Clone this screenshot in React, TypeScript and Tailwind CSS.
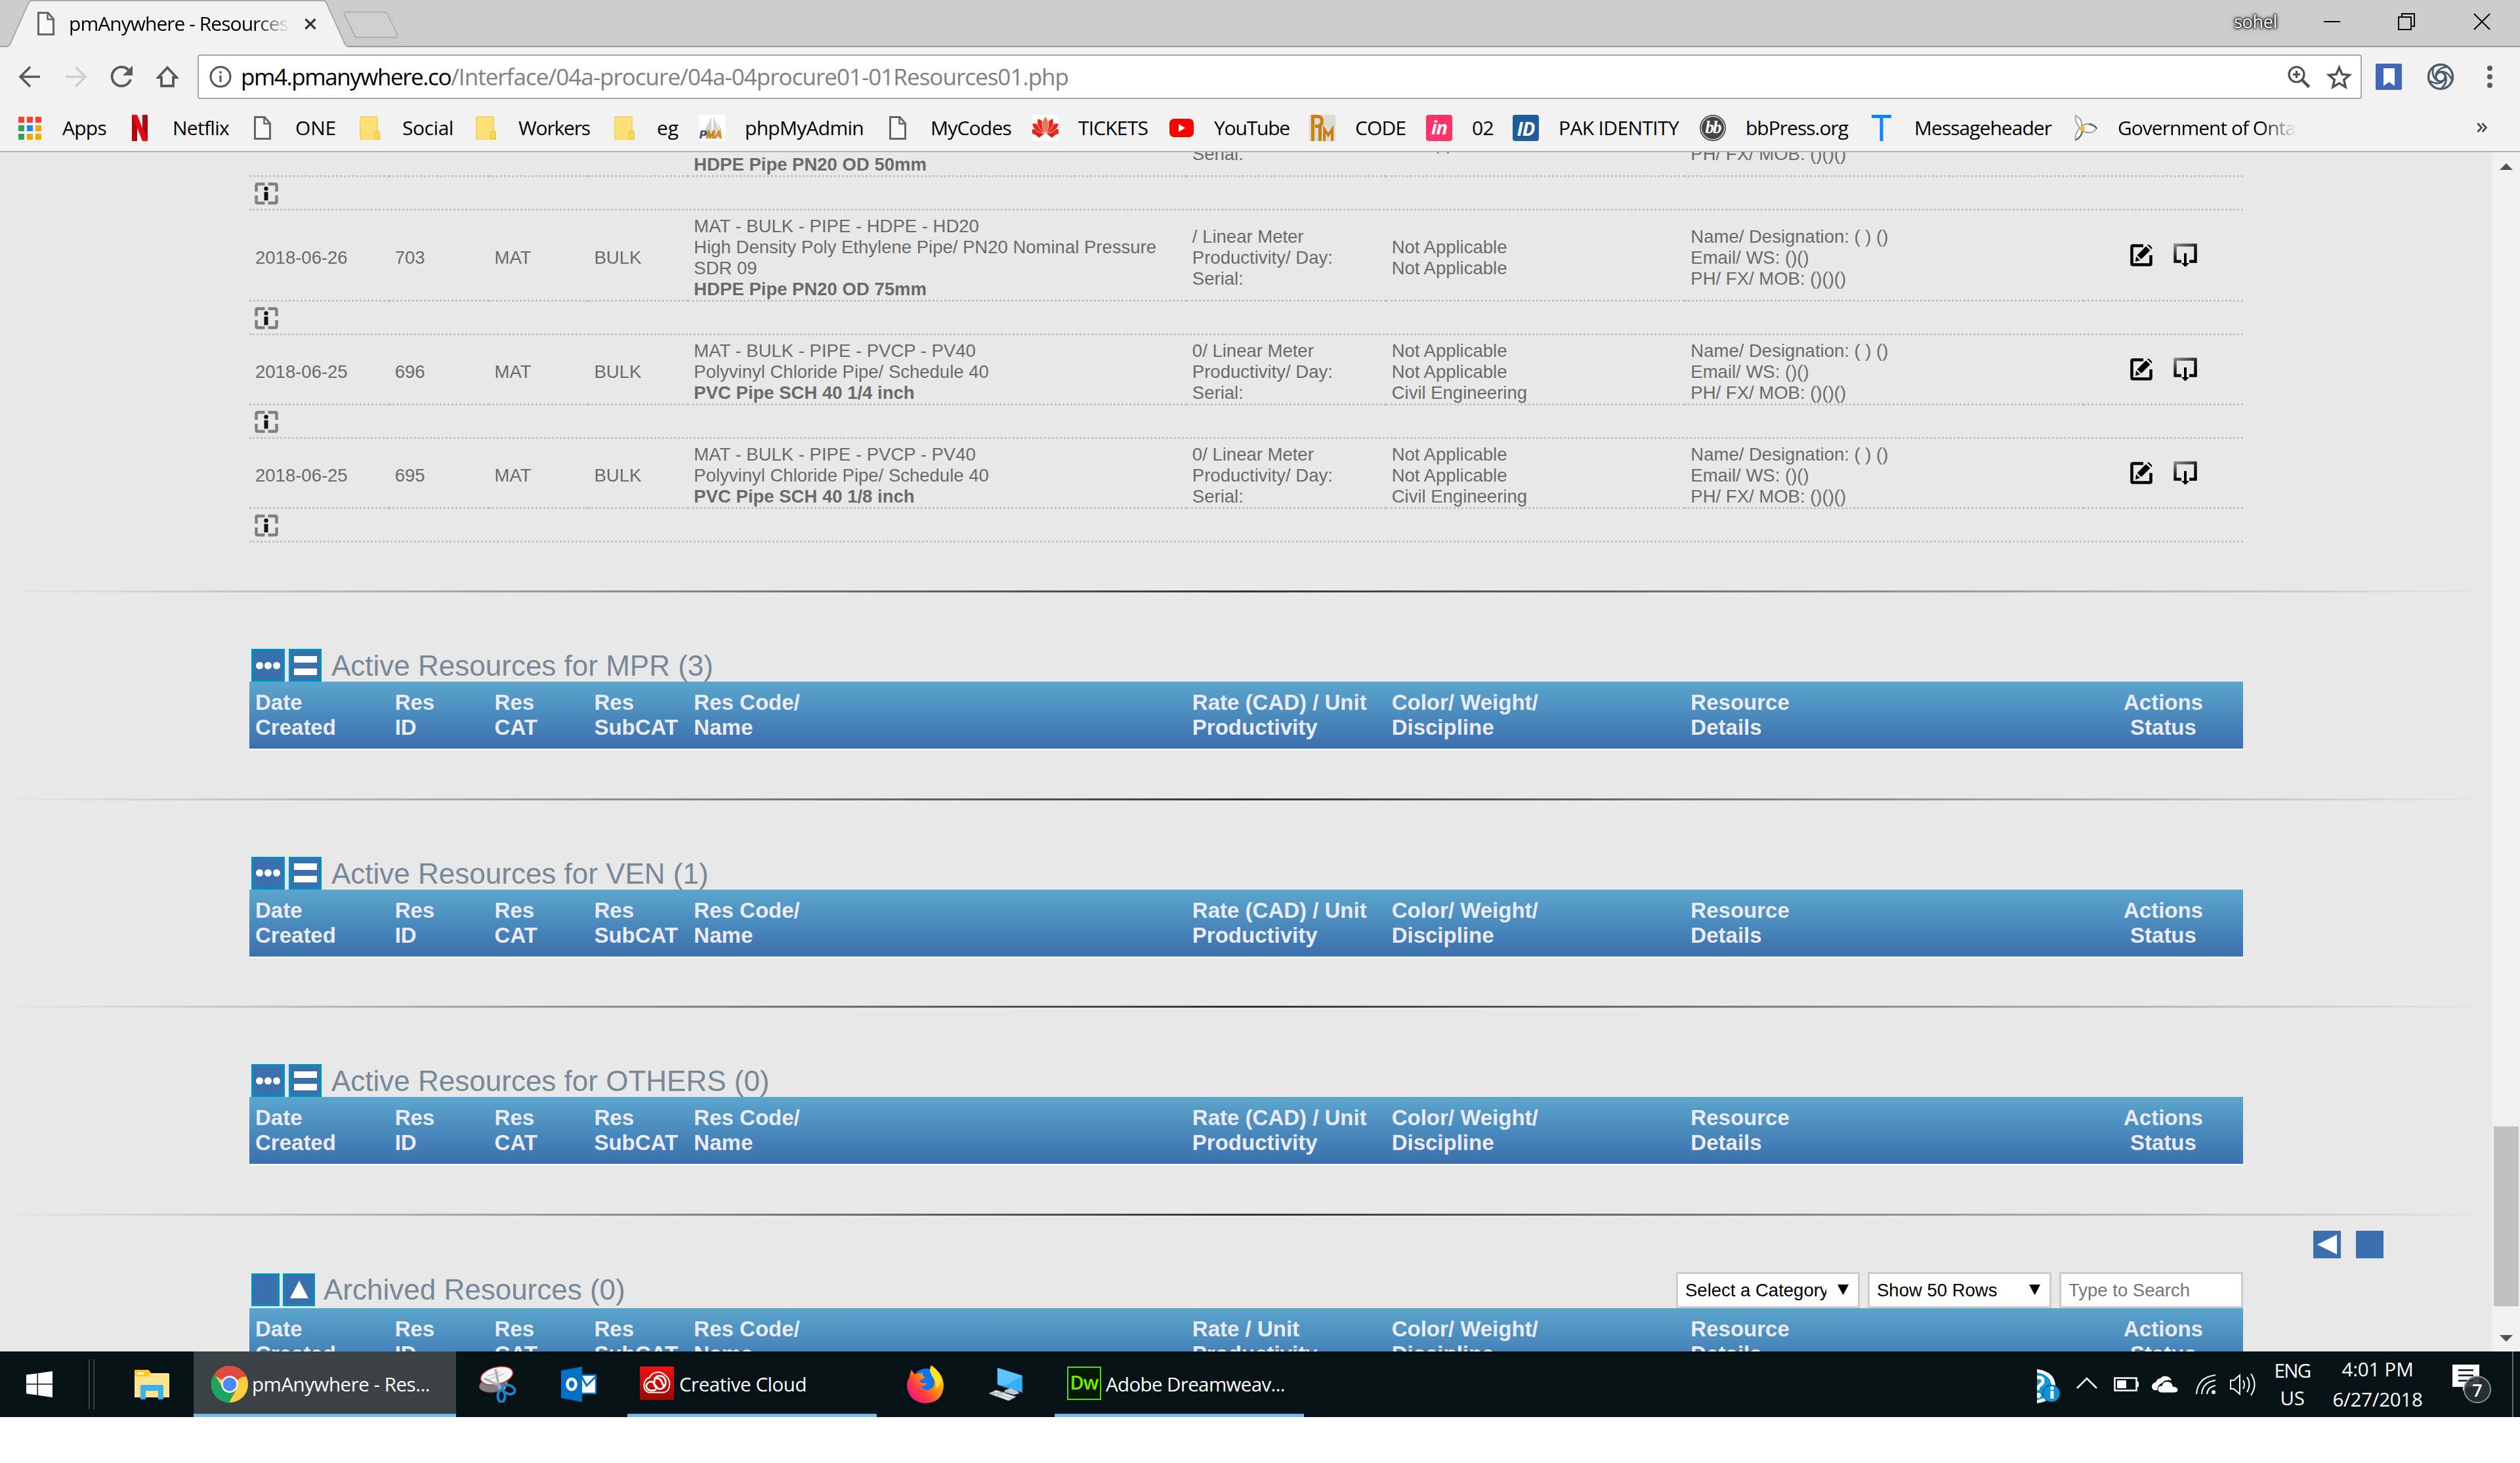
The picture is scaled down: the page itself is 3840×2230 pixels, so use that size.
import { useLayoutEffect, useRef } from "react";
import type { ReactNode } from "react";

/* Single-line label whose tracking is tuned so that it fills the given width. */
function Fit({ w, className = "", children }: { w: number; className?: string; children: string }) {
  const ref = useRef<HTMLSpanElement>(null);
  useLayoutEffect(() => {
    const el = ref.current;
    if (!el) return;
    el.style.letterSpacing = "0px";
    const natural = el.getBoundingClientRect().width;
    el.style.letterSpacing = `${(w - natural) / children.length}px`;
  }, [w, children]);
  return (
    <span ref={ref} className={`inline-block shrink-0 whitespace-pre font-['Open_Sans',sans-serif] ${className}`}>
      {children}
    </span>
  );
}

/* ---------- browser icons ---------- */

const FileIcon = () => (
  <svg className="h-[36px] w-[26px]" viewBox="0 0 26 36" fill="none" stroke="#666" strokeWidth="3">
    <path d="M1.500 1.500h14.500l8.500 9.500v23.500H1.500z" fill="#f8f8f8" />
    <path d="M15.500 1.500v10h9" strokeWidth="2.500" />
  </svg>
);

const FolderIcon = () => (
  <svg className="h-[36px] w-[31px]" viewBox="0 0 31 36">
    <path d="M2 1h23q2 0 2 2v20l4 2v8q0 3-3 3H4q-3 0-3-3V2q0-1 1-1z" fill="#ffe078" stroke="#f2cb4f" strokeWidth="1.500" />
    <path d="M23 34V25q0-2 2-2h3q2 0 2 2v7q0 3-3 3z" fill="#ffd95c" stroke="#eec23f" strokeWidth="1.500" />
  </svg>
);

const AppsIcon = () => (
  <div className="grid grid-cols-3 gap-[4px]">
    {["bg-[#ff3d32]", "bg-[#ff3d32]", "bg-[#ff3d32]", "bg-[#2ea456]", "bg-[#1e88e5]", "bg-[#f7a600]", "bg-[#2ea456]", "bg-[#f7a600]", "bg-[#f7a600]"].map((c, i) => (
      <div key={i} className={`size-[9px] ${c}`} />
    ))}
  </div>
);

const NetflixIcon = () => (
  <svg className="h-[40px] w-[24px]" viewBox="0 0 24 40">
    <path d="M0 0h8v40H0zM16 0h8v40h-8z" fill="#b1060f" />
    <path d="M0 0h8l16 40h-8z" fill="#e50914" />
  </svg>
);

const PmaIcon = () => (
  <div className="relative h-[40px] w-[40px] bg-white">
    <svg className="h-[26px] w-[40px]" viewBox="0 0 40 26">
      <path d="M19 3l-11 22h11zM22 2v22h9zM27 8l8 16h-3z" fill="#d3d3d3" />
    </svg>
    <span className="absolute bottom-[2px] left-[1px] font-['Liberation_Sans',sans-serif] text-[16px] leading-[14px] font-bold tracking-[-0.500px] text-[#f59a00] italic [text-shadow:0_0_1px_#222,0_0_1px_#222]">
      <span className="text-[#4c588f]">P</span>MA
    </span>
  </div>
);

const HuaweiIcon = () => (
  <svg className="h-[40px] w-[40px] bg-white" viewBox="0 0 40 40">
    {[-82, -54, 82, 54, -27, 27, 0].map((a) => (
      <path key={a} d="M20 28C13 20 14 8 20 3c6 5 7 17 0 25z" fill={a === 0 ? "#f4744f" : "#f0231c"} stroke="#fff" strokeWidth=".7" transform={`rotate(${a} 20 28)`} />
    ))}
    <path d="M4 29l14 0-8 6zM36 29l-14 0 8 6z" fill="#e01b1b" />
  </svg>
);

const YouTubeIcon = () => (
  <svg className="h-[28px] w-[37px]" viewBox="0 0 37 28">
    <rect width="37" height="28" rx="7" fill="#f00" />
    <path d="M14 8v12l10-6z" fill="#fff" />
  </svg>
);

const CodeIcon = () => (
  <svg className="h-[40px] w-[40px]" viewBox="0 0 40 40" fill="none" stroke="#c97f12" strokeWidth="5">
    <rect width="40" height="40" fill="#dedbd5" stroke="none" />
    <path d="M5.500 40V2.500h7q7 0 7 7t-7 8H9M16.500 17v23" />
    <path d="M23 40V22l6 9 6-9v18" strokeWidth="4" />
  </svg>
);

const InVisionIcon = () => (
  <div className="flex h-[40px] w-[40px] items-center justify-center rounded-[4px] bg-[#ff3366] pb-[3px] font-['Open_Sans',sans-serif] text-[29px] leading-none font-bold tracking-[-1px] text-white italic">in</div>
);

const IdIcon = () => (
  <div className="flex h-[40px] w-[40px] items-center justify-center rounded-[4px] bg-[#1f5c99] font-['Open_Sans',sans-serif] text-[29px] leading-none font-bold tracking-[-1px] text-white italic">ID</div>
);

const BbIcon = () => (
  <div className="flex size-[40px] items-center justify-center rounded-full border-[2px] border-[#555] bg-white">
    <div className="flex size-[34px] items-center justify-center rounded-full bg-[#444] pb-[2px] font-['Liberation_Serif',serif] text-[27px] leading-none font-bold tracking-[-2px] text-white italic">bb</div>
  </div>
);

const TIcon = () => (
  <svg className="h-[40px] w-[30px]" viewBox="0 0 30 40">
    <path d="M0 0h30v5H17.500v35h-5V5H0z" fill="#0a84ff" />
  </svg>
);

const TrilliumIcon = () => (
  <svg className="h-[40px] w-[40px]" viewBox="0 0 40 40">
    <path d="M5 1q11 6 9 17 6-6 13-3 6 1 10 6-6 7-12 6-8 0-10-4 1 10-10 16-2-9 6-19Q3 9 5 1z" fill="#fff" stroke="#999" strokeWidth="1.800" />
    <path d="M5 38q10-5 10-15M25 14q9 1 12 7" fill="none" stroke="#555" strokeWidth="1.800" />
    <circle cx="15" cy="21" r="4" fill="#f7b64a" />
  </svg>
);

/* ---------- browser chrome ---------- */

function TabStrip() {
  return (
    <div className="flex h-[72px] items-start justify-between border-b-[2px] border-[#9b9b9b] bg-[#cccccc]">
      <div className="relative h-[72px] w-[620px]">
        <svg className="absolute inset-0 h-[72px] w-[620px]" viewBox="0 0 620 72">
          <path d="M0 71H10q4 0 6-5L43 6q2-5 6-5H492q4 0 6 5L525 66q2 5 6 5v1H0z" fill="#f2f2f2" />
          <path d="M0 71H10q4 0 6-5L43 6q2-5 6-5H492q4 0 6 5L525 66q2 5 6 5H620" fill="none" stroke="#9b9b9b" strokeWidth="1.500" />
          <path d="M528 18.500H586q4 0 5 4L605 52q2 5-3 5H545q-4 0-5-4L525 23q-2-4.500 3-4.500z" fill="#cfcfcf" stroke="#a6a6a6" strokeWidth="1.500" />
        </svg>
        <div className="relative flex h-[72px] items-center pl-[57px]">
          <FileIcon />
          <div className="ml-[22px] w-[336px] [mask-image:linear-gradient(to_right,#000_84%,transparent)]">
            <Fit w={334} className="text-[30px] leading-[40px] text-black">pmAnywhere - Resources</Fit>
          </div>
          <svg className="ml-[23px] h-[17px] w-[18px]" viewBox="0 0 18 17" stroke="#333" strokeWidth="3.200">
            <path d="M1.500 1l15 15M16.500 1l-15 15" />
          </svg>
        </div>
      </div>
      <div className="flex h-[66px] items-center pr-[45px]">
        <Fit w={66} className="text-[27px] leading-[40px] text-white [text-shadow:0_0_2px_#000,0_0_3px_#000,0_0_4px_#222,0_0_6px_#444]">sohel</Fit>
        <div className="ml-[71px] h-[2px] w-[25px] bg-black" />
        <svg className="ml-[88px] h-[26px] w-[26px]" viewBox="0 0 26 26" fill="none" stroke="#000" strokeWidth="2">
          <path d="M1 6h19v19H1zM6 6V1h19v19h-5" />
        </svg>
        <svg className="ml-[89px] h-[26px] w-[26px]" viewBox="0 0 26 26" stroke="#000" strokeWidth="2">
          <path d="M1 1l24 24M25 1L1 25" />
        </svg>
      </div>
    </div>
  );
}

function Toolbar() {
  return (
    <div className="flex h-[90px] items-center bg-[#f2f2f2] pl-[28px]">
      <svg className="h-[34px] w-[34px]" viewBox="0 0 34 34" fill="none" stroke="#5a5a5a" strokeWidth="3.600">
        <path d="M33 17H3M18 2L3 17l15 15" />
      </svg>
      <svg className="ml-[37px] h-[34px] w-[34px]" viewBox="0 0 34 34" fill="none" stroke="#d0d0d0" strokeWidth="3.600">
        <path d="M1 17h30M16 2l15 15-15 15" />
      </svg>
      <svg className="ml-[35px] h-[34px] w-[34px]" viewBox="0 0 34 34" fill="none" stroke="#5a5a5a" strokeWidth="3.800">
        <path d="M28 7A14.500 14.500 0 1 0 31 21" />
        <path d="M34 0v15H19z" fill="#5a5a5a" stroke="none" />
      </svg>
      <svg className="ml-[36px] h-[34px] w-[34px]" viewBox="0 0 34 34" fill="none" stroke="#5a5a5a" strokeWidth="3.800">
        <path d="M17 3L3 18h5v13h18V18h5z" />
      </svg>
      <div className="ml-[29px] flex h-[68px] w-[3298px] items-center rounded-[4px] border-[2px] border-[#a6a6a6] bg-white pl-[16px]">
        <svg className="h-[34px] w-[34px]" viewBox="0 0 34 34" fill="none" stroke="#555" strokeWidth="3">
          <circle cx="17" cy="17" r="15" />
          <path d="M17 15v10M17 8.500v3.500" />
        </svg>
        <div className="ml-[14px] flex text-[35px] leading-[50px]">
          <Fit w={320} className="text-black">pm4.pmanywhere.co</Fit>
          <Fit w={941} className="text-[#808080]">/Interface/04a-procure/04a-04procure01-01Resources01.php</Fit>
        </div>
        <svg className="ml-auto h-[34px] w-[34px]" viewBox="0 0 34 34" fill="none" stroke="#505050" strokeWidth="3.200">
          <circle cx="13.500" cy="13.500" r="11.500" />
          <path d="M22 22l10.500 10.500M8 13.500h11M13.500 8v11" />
          <path d="M23 23l9.500 9.500" strokeWidth="4.500" />
        </svg>
        <svg className="mr-[13px] ml-[25px] h-[37px] w-[39px]" viewBox="0 0 39 37" fill="none" stroke="#505050" strokeWidth="3.400">
          <path d="M19.500 4l4.400 10.300 11.300 1-8.500 7.400 2.500 11-9.700-5.800-9.700 5.800 2.500-11-8.500-7.400 11.300-1z" />
        </svg>
      </div>
      <div className="ml-[21px] flex h-[40px] w-[40px] items-center justify-center rounded-[2px] bg-[#4267b8]">
        <svg className="h-[27px] w-[17px]" viewBox="0 0 17 27"><path d="M0 0h17v27l-8.500-6L0 27z" fill="#fff" /></svg>
      </div>
      <svg className="ml-[38px] h-[42px] w-[42px]" viewBox="0 0 42 42" fill="none" stroke="#4a5a68" strokeWidth="3.400">
        <circle cx="21" cy="21" r="18.500" />
        {[0, 72, 144, 216, 288].map((a) => (
          <path key={a} d="M16.500 14.500C23 12 29 17 29.500 23c.5 6-2 11-7 15" transform={`rotate(${a} 21 21)`} strokeWidth="2.800" />
        ))}
      </svg>
      <div className="ml-[50px] flex flex-col gap-[5px]">
        <div className="size-[8px] rounded-full bg-[#5a5a5a]" />
        <div className="size-[8px] rounded-full bg-[#5a5a5a]" />
        <div className="size-[8px] rounded-full bg-[#5a5a5a]" />
      </div>
    </div>
  );
}

type Mark = { box: string; icon: ReactNode; label: string; w: number };
const marks: Mark[] = [
  { box: "w-[168px]", icon: <AppsIcon />, label: "Apps", w: 67 },
  { box: "w-[187px]", icon: <NetflixIcon />, label: "Netflix", w: 86 },
  { box: "w-[163px]", icon: <FileIcon />, label: "ONE", w: 62 },
  { box: "w-[177px]", icon: <FolderIcon />, label: "Social", w: 78 },
  { box: "w-[211px]", icon: <FolderIcon />, label: "Workers", w: 109 },
  { box: "w-[134px]", icon: <FolderIcon />, label: "eg", w: 33 },
  { box: "w-[283px]", icon: <PmaIcon />, label: "phpMyAdmin", w: 181 },
  { box: "w-[225px]", icon: <FileIcon />, label: "MyCodes", w: 123 },
  { box: "w-[207px]", icon: <HuaweiIcon />, label: "TICKETS", w: 106 },
  { box: "w-[215px]", icon: <YouTubeIcon />, label: "YouTube", w: 115 },
  { box: "w-[178px]", icon: <CodeIcon />, label: "CODE", w: 77 },
  { box: "w-[132px]", icon: <InVisionIcon />, label: "02", w: 33 },
  { box: "w-[285px]", icon: <IdIcon />, label: "PAK IDENTITY", w: 183 },
  { box: "w-[257px]", icon: <BbIcon />, label: "bbPress.org", w: 156 },
  { box: "w-[311px]", icon: <TIcon />, label: "Messageheader", w: 209 },
];

function Bookmarks() {
  return (
    <div className="flex h-[70px] items-start border-b-[2px] border-[#b4b4b4] bg-[#f2f2f2] pt-[13px] pl-[25px]">
      {marks.map((m) => (
        <div key={m.label} className={`flex h-[40px] shrink-0 items-center ${m.box}`}>
          <div className="flex w-[40px] justify-center">{m.icon}</div>
          <Fit w={m.w} className="ml-[30px] text-[30px] leading-[40px] text-black">{m.label}</Fit>
        </div>
      ))}
      <div className="flex h-[40px] items-center">
        <TrilliumIcon />
        <div className="ml-[29px] w-[272px] [mask-image:linear-gradient(to_right,#000_80%,transparent)]">
          <Fit w={271} className="text-[30px] leading-[40px] text-black">Government of Onta</Fit>
        </div>
      </div>
      <svg className="mt-[12px] ml-[275px] h-[15px] w-[17px]" viewBox="0 0 17 15" fill="none" stroke="#444" strokeWidth="2.600">
        <path d="M1.500 1l6 6.500-6 6.500M8.500 1l6 6.500-6 6.500" />
      </svg>
    </div>
  );
}

/* ---------- page ---------- */

const cols = "grid grid-cols-[7fr_5fr_5fr_5fr_25fr_10fr_15fr_20fr_8fr]";
const line = "border-b-[3px] border-dotted border-[#c2c2c2]";
const cell = `flex min-w-0 flex-col justify-center pt-[8px] pl-[9px] whitespace-nowrap ${line}`;
const endCell = `flex min-w-0 flex-col justify-end pl-[9px] whitespace-nowrap ${line}`;

const InfoIcon = () => (
  <svg className="h-[34px] w-[36px]" viewBox="0 0 36 34" fill="none">
    <path d="M2.500 14V4.500q0-2 2-2H15.500M20.500 2.500H31.500q2 0 2 2V14M33.500 20v9.500q0 2-2 2H20.500M15.500 31.500H4.500q-2 0-2-2V20" stroke="#808080" strokeWidth="4.500" />
    <path d="M17.500 14.500V27.500" stroke="#111" strokeWidth="6" />
    <circle cx="17.500" cy="9.500" r="3.200" fill="#111" />
  </svg>
);

const EditIcon = () => (
  <svg className="h-[34px] w-[34px]" viewBox="0 0 34 34">
    <path d="M20 2.500H4q-1.500 0-1.500 1.500V30q0 1.500 1.500 1.500H30q1.500 0 1.500-1.500V17" fill="none" stroke="#000" strokeWidth="4.500" />
    <path d="M24 3.500l6.500 6L17 23l-6.500-6zM9 19l6 5.500L8 27zM26 1.500q1.500-1.500 3.500 0l3.500 3.500q1 1.500-.5 3z" fill="#000" />
  </svg>
);

const DownloadIcon = () => (
  <svg className="h-[36px] w-[36px]" viewBox="0 0 36 36">
    <defs>
      <linearGradient id="frame" x1="0" y1="0" x2="0.6" y2="1">
        <stop offset="0" stopColor="#888" />
        <stop offset=".5" stopColor="#222" />
        <stop offset="1" stopColor="#000" />
      </linearGradient>
    </defs>
    <path d="M12 27.500H2.500v-25h31v25H24" fill="none" stroke="url(#frame)" strokeWidth="4.500" />
    <path d="M16 15h4v15h4l-6 6-6-6h4z" fill="#000" />
  </svg>
);

type Res = { date: string; id: string; name: string[]; bold: string; rate: string; disc: string[] };
const na = "Not Applicable";
const pvc = ["MAT - BULK - PIPE - PVCP - PV40", "Polyvinyl Chloride Pipe/ Schedule 40"];
const rows: Res[] = [
  {
    date: "2018-06-26",
    id: "703",
    name: ["MAT - BULK - PIPE - HDPE - HD20", "High Density Poly Ethylene Pipe/ PN20 Nominal Pressure", "SDR 09"],
    bold: "HDPE Pipe PN20 OD 75mm",
    rate: "/ Linear Meter",
    disc: [na, na],
  },
  { date: "2018-06-25", id: "696", name: pvc, bold: "PVC Pipe SCH 40 1/4 inch", rate: "0/ Linear Meter", disc: [na, na, "Civil Engineering"] },
  { date: "2018-06-25", id: "695", name: pvc, bold: "PVC Pipe SCH 40 1/8 inch", rate: "0/ Linear Meter", disc: [na, na, "Civil Engineering"] },
];

const InfoRow = () => (
  <div className={`flex h-[51px] items-center pt-[1px] pl-[8px] ${line}`}>
    <InfoIcon />
  </div>
);

/* Row that is mostly scrolled out above the viewport; only its last lines show. */
function ScrolledRow() {
  return (
    <div className={`${cols} grid-rows-[38px] text-[27.500px] leading-[32px] text-[#6a6a6a]`}>
      <div className={line} />
      <div className={line} />
      <div className={line} />
      <div className={line} />
      <div className={endCell}><div className="font-bold">HDPE Pipe PN20 OD 50mm</div></div>
      <div className={`${endCell} pb-[16px]`}><div>Serial:</div></div>
      <div className={`${endCell} pb-[32px]`}><div>Not Applicable</div></div>
      <div className={`${endCell} pb-[16px]`}><div>PH/ FX/ MOB: ()()()</div></div>
      <div className={line} />
    </div>
  );
}

function ResourceRow({ r }: { r: Res }) {
  return (
    <>
      <div className={`${cols} text-[27.500px] leading-[32px] text-[#6a6a6a]`}>
        <div className={cell}>{r.date}</div>
        <div className={cell}>{r.id}</div>
        <div className={cell}>MAT</div>
        <div className={cell}>BULK</div>
        <div className={cell}>
          {r.name.map((n) => <div key={n}>{n}</div>)}
          <div className="font-bold">{r.bold}</div>
        </div>
        <div className={cell}>
          <div>{r.rate}</div>
          <div>Productivity/ Day:</div>
          <div>Serial:</div>
        </div>
        <div className={cell}>{r.disc.map((d, i) => <div key={i}>{d}</div>)}</div>
        <div className={cell}>
          <div>Name/ Designation: ( ) ()</div>
          <div>Email/ WS: ()()</div>
          <div>PH/ FX/ MOB: ()()()</div>
        </div>
        <div className={`flex items-center justify-center gap-[32px] pl-[2px] ${line}`}>
          <EditIcon />
          <DownloadIcon />
        </div>
      </div>
      <InfoRow />
    </>
  );
}

function HeaderBar({ rate = "Rate (CAD) / Unit" }: { rate?: string }) {
  const heads = [["Date", "Created"], ["Res", "ID"], ["Res", "CAT"], ["Res", "SubCAT"], ["Res Code/", "Name"], [rate, "Productivity"], ["Color/ Weight/", "Discipline"], ["Resource", "Details"]];
  return (
    <div className={`${cols} h-[105px] border-b-[3px] border-[#f6f6f8] bg-gradient-to-b from-[#5ba6cd] to-[#3b6fad] bg-clip-padding pt-[13px] text-[33px] leading-[38px] font-bold whitespace-nowrap text-[#ebebfa]`}>
      {heads.map(([a, b], i) => (
        <div key={i} className="min-w-0 pl-[9px]">
          <div>{a}</div>
          <div>{b}</div>
        </div>
      ))}
      <div className="min-w-0 text-center">
        <div>Actions</div>
        <div>Status</div>
      </div>
    </div>
  );
}

const Rule = () => (
  <div className="h-[3px] w-[3798px] bg-[linear-gradient(to_right,rgba(51,51,51,0),rgba(51,51,51,1)_50%,rgba(51,51,51,0))]" />
);

function ActiveSection({ name }: { name: string }) {
  return (
    <section className="h-[316.600px]">
      <Rule />
      <div className="mx-auto mt-[86px] w-[3038px]">
        <div className="flex h-[50px] pl-[3px]">
          <div className="flex w-[51px] items-center justify-center gap-[2px] border-[3px] border-[#0091bd] bg-[#3b6fad]">
            <div className="size-[11px] rounded-full bg-white" />
            <div className="size-[11px] rounded-full bg-white" />
            <div className="size-[11px] rounded-full bg-white" />
          </div>
          <div className="ml-[6px] flex w-[50px] flex-col items-center justify-center gap-[9px] border-[3px] border-[#0091bd] bg-[#3b6fad]">
            <div className="h-[10px] w-[35px] bg-white" />
            <div className="h-[10px] w-[35px] bg-white" />
          </div>
          <h2 className="ml-[15px] text-[44px] leading-[51px] text-[#778899]">{`Active Resources for ${name}`}</h2>
        </div>
        <HeaderBar />
      </div>
    </section>
  );
}

function Select({ label }: { label: string }) {
  return (
    <div className="flex h-[55px] w-[280px] items-center border-[3px] border-[#cccccc] bg-white pl-[11px] text-black">
      <div className="w-[215px] overflow-hidden whitespace-nowrap">{label}</div>
      <svg className="ml-[17px] h-[16px] w-[17px]" viewBox="0 0 17 16"><path d="M0 0h17L8.500 16z" /></svg>
    </div>
  );
}

function Page() {
  return (
    <div className="flex h-[1828px] bg-[#e8e8e8]">
      <main className="relative h-[1828px] w-[3798px] overflow-hidden font-['Liberation_Sans',Arial,sans-serif]">
        <div className="mx-auto mb-[73px] w-[3038px]">
          <ScrolledRow />
          <InfoRow />
          {rows.map((r) => <ResourceRow key={r.id} r={r} />)}
        </div>
        <ActiveSection name="MPR (3)" />
        <ActiveSection name="VEN (1)" />
        <ActiveSection name="OTHERS (0)" />
        <Rule />
        <div className="mx-auto mt-[86px] w-[3038px]">
          <div className="flex h-[55px] justify-between">
            <div className="flex h-[55px] items-start pt-[2px] pl-[3px]">
              <div className="h-[50px] w-[43px] border-[3px] border-[#0091bd] bg-[#3b6fad]" />
              <div className="ml-[5px] flex h-[50px] w-[49px] items-center justify-center border-[3px] border-[#0091bd] bg-[#3b6fad]">
                <svg className="h-[27px] w-[28px]" viewBox="0 0 28 27"><path d="M14 0l14 27H0z" fill="#fff" /></svg>
              </div>
              <h2 className="ml-[13px] text-[44px] leading-[49px] text-[#778899]">Archived Resources (0)</h2>
            </div>
            <div className="flex gap-[12px] text-[27.500px]">
              <Select label="Select a Category" />
              <Select label="Show 50 Rows" />
              <div className="flex h-[55px] w-[280px] items-center border-[3px] border-[#cccccc] bg-white pl-[11px] text-[#757575]">Type to Search</div>
            </div>
          </div>
          <HeaderBar rate="Rate / Unit" />
        </div>
        <div className="absolute top-[1644px] left-[3525px] flex gap-[23px]">
          <div className="flex h-[42px] w-[42px] items-center justify-center bg-[#3b6fad]">
            <svg className="h-[30px] w-[30px]" viewBox="0 0 30 30"><path d="M30 0v30L0 15z" fill="#fff" /></svg>
          </div>
          <div className="h-[42px] w-[42px] bg-[#3b6fad]" />
        </div>
      </main>
      <div className="flex w-[42px] flex-col items-center bg-[#f1f1f1]">
        <svg className="mt-[17px] h-[10px] w-[20px]" viewBox="0 0 20 10"><path d="M10 0l10 10H0z" fill="#505050" /></svg>
        <div className="mt-[1458px] h-[274px] w-[38px] bg-[#c1c1c1]" />
        <svg className="mt-[44px] h-[10px] w-[20px]" viewBox="0 0 20 10"><path d="M0 0h20L10 10z" fill="#505050" /></svg>
      </div>
    </div>
  );
}

/* ---------- taskbar ---------- */

const WindowsLogo = () => (
  <svg className="h-[40px] w-[40px]" viewBox="0 0 40 40" fill="#fff">
    <path d="M0 5.600L16.500 3.400V19H0zM18 3.200L40 0v19H18zM0 20.500h16.500v16L0 34.300zM18 20.500h22V40l-22-3.200z" />
  </svg>
);

const ExplorerIcon = () => (
  <svg className="h-[45px] w-[53px]" viewBox="0 0 53 45">
    <path d="M0 2q0-2 2-2h19l4 5h26q2 0 2 2v35H0z" fill="#ffe48f" />
    <path d="M0 2q0-2 2-2h19l4 5-4 5H0z" fill="#ffc928" />
    <path d="M4 4h10v3H4z" fill="#fff" />
    <path d="M9 45V25q0-2 2-2h31q2 0 2 2v20h-8V32H17v13z" fill="#38b4ea" />
  </svg>
);

const ChromeIcon = () => (
  <svg className="h-[56px] w-[56px]" viewBox="0 0 56 56">
    <circle cx="28" cy="28" r="28" fill="#ffcd40" />
    <path d="M28 28L3.800 14A28 28 0 0 1 52.200 14z" fill="#dd4b3e" />
    <path d="M28 0a28 28 0 0 1 25.500 16.500H28z" fill="#dd4b3e" />
    <path d="M4.500 12.600A28 28 0 0 0 27 56l12-21.500L18 34z" fill="#1da462" />
    <circle cx="28" cy="28" r="13" fill="#f1f1f1" />
    <circle cx="28" cy="28" r="10.300" fill="#4a8af4" />
  </svg>
);

const SnipIcon = () => (
  <svg className="h-[56px] w-[56px]" viewBox="0 0 56 56" fill="none">
    <ellipse cx="22" cy="29" rx="22" ry="11" fill="#7d8083" stroke="#a33" strokeWidth="1" transform="rotate(-8 22 29)" />
    <ellipse cx="27" cy="15" rx="25" ry="13" fill="#f4f4f6" stroke="#c33" strokeWidth="1.500" transform="rotate(-14 27 15)" />
    <path d="M12 16l20-7M14 21l24-9" stroke="#c4c4c8" strokeWidth="1.500" />
    <path d="M25 5l7 34M8 19l32 16" stroke="#a5abb5" strokeWidth="3.500" />
    <ellipse cx="45" cy="36" rx="10" ry="6.500" stroke="#1b86cc" strokeWidth="4" transform="rotate(20 45 36)" />
    <ellipse cx="34" cy="46" rx="5.500" ry="9" stroke="#1b86cc" strokeWidth="4" />
  </svg>
);

const OutlookIcon = () => (
  <svg className="h-[54px] w-[54px]" viewBox="0 0 54 54" fill="none">
    <path d="M30 13h23v28H30z" fill="#fff" stroke="#0a74cf" strokeWidth="2.500" />
    <path d="M31 15l8 14 14-14" stroke="#0a74cf" strokeWidth="3" />
    <path d="M0 6L32 0v54L0 48z" fill="#0072c6" />
    <ellipse cx="16" cy="27" rx="6.500" ry="8" stroke="#fff" strokeWidth="4.500" />
  </svg>
);

const CreativeCloudIcon = () => (
  <svg className="h-[51px] w-[52px]" viewBox="0 0 52 51" fill="none" stroke="#fff" strokeWidth="2.800">
    <defs>
      <linearGradient id="cc" x1="0" y1="0" x2="0" y2="1">
        <stop offset="0" stopColor="#f40f0f" />
        <stop offset="1" stopColor="#9c0606" />
      </linearGradient>
    </defs>
    <rect width="52" height="51" fill="url(#cc)" stroke="none" />
    <path d="M15 39.500C4 39 3 20 15 16.500 19 7 33 6 39 14c9 5 9 25-4 25.500z" strokeWidth="2" />
    <path d="M28 34l-8-10c-5-3-11 2-10 7 2 7 11 6 15 4M22 20c3-8 14-8 17 1 2 9-5 14-10 13-6-1-9-8-6-14M25 19c3-3 7 1 8 4l4 8" />
  </svg>
);

const FirefoxIcon = () => (
  <svg className="h-[58px] w-[56px]" viewBox="0 0 56 58">
    <defs>
      <linearGradient id="fx" x1="1" y1="0" x2="0.1" y2="0.9">
        <stop offset="0" stopColor="#ffe52b" />
        <stop offset=".45" stopColor="#ff980e" />
        <stop offset=".75" stopColor="#ff3647" />
        <stop offset="1" stopColor="#e31587" />
      </linearGradient>
    </defs>
    <circle cx="29" cy="25" r="20" fill="#0a74f0" />
    <path d="M7 7l5 7q5-3 9-1l2-3q0 6 5 9-5 2-9 5 3 4 12 3-3 6-10 5 8 10 17 3 8-8 0-20Q32 8 37 0q5 4 9 8 9 8 10 22-1 27-28 28Q2 56 0 31q0-7 4-13 0-6 3-11z" fill="url(#fx)" />
    <path d="M38 1q-5 9 2 18 6 9 4 17 8-6 9-14Q49 8 38 1z" fill="#ffe226" />
  </svg>
);

const ComputerIcon = () => (
  <svg className="h-[50px] w-[52px]" viewBox="0 0 52 50">
    <path d="M13 0l38 12v26L13 26z" fill="#35aefb" stroke="#33414c" strokeWidth="1" />
    <path d="M13 0l38 12-26 15-12-2z" fill="#5cc3ff" />
    <path d="M24 34l9-3 11 5 2 3-8 2-14-4z" fill="#bfcad2" />
    <path d="M0 39l11-5 30 10-11 6z" fill="#dfe4e8" stroke="#8d979e" strokeWidth="1" />
    <path d="M5 37l30 10M3 40l27-4M12 43l14-7" stroke="#9aa3a9" strokeWidth="1" />
  </svg>
);

const HelpIcon = () => (
  <svg className="h-[54px] w-[35px]" viewBox="0 0 35 54">
    <path d="M0 1q28 4 28 26T0 53z" fill="#fff" />
    <path d="M0 6q22 4 22 21T0 48z" fill="#0f97d6" />
    <path d="M0 14q9-2 9 5 0 4-4 6-4 3-4 8" fill="none" stroke="#fff" strokeWidth="5" />
    <circle cx="2" cy="41" r="4" fill="#fff" />
    <circle cx="22" cy="38" r="13" fill="#0a94d8" stroke="#06425f" strokeWidth="1" />
    <path d="M23 34v12" stroke="#fff" strokeWidth="5" />
    <circle cx="23" cy="30" r="2.800" fill="#fff" />
  </svg>
);

function Taskbar() {
  const label = "text-[29.500px] leading-[40px] text-white";
  return (
    <div className="flex h-[100px] items-stretch bg-[#071216] text-white">
      <div className="flex w-[295px] shrink-0 items-center pl-[40px]">
        <WindowsLogo />
        <div className="ml-[55px] flex h-[76px] w-[9px] justify-between border-x-[2px] border-[#3a4245]" />
        <div className="ml-[61px]"><ExplorerIcon /></div>
      </div>
      <div className="flex w-[400px] shrink-0 items-center border-b-[5px] border-[#76b9ed] bg-[#3b4245] pt-[5px] pl-[27px]">
        <ChromeIcon />
        <Fit w={271} className={`ml-[6px] ${label}`}>pmAnywhere - Res...</Fit>
      </div>
      <div className="flex w-[261px] shrink-0 items-center pl-[35px]">
        <SnipIcon />
        <div className="ml-[69px]"><OutlookIcon /></div>
      </div>
      <div className="flex w-[380px] shrink-0 items-center border-b-[5px] border-[#76b9ed] pt-[5px] pl-[19px]">
        <div className="-mt-[3px]"><CreativeCloudIcon /></div>
        <Fit w={194} className={`ml-[8px] ${label}`}>Creative Cloud</Fit>
      </div>
      <div className="flex w-[271px] shrink-0 items-center pl-[46px]">
        <FirefoxIcon />
        <div className="ml-[69px]"><ComputerIcon /></div>
      </div>
      <div className="flex w-[380px] shrink-0 items-center border-b-[5px] border-[#76b9ed] pt-[5px] pl-[19px]">
        <div className="-mt-[3px] flex h-[51px] w-[52px] items-center justify-center border-[2px] border-[#4ee000] bg-[#061802] pb-[5px] font-['Open_Sans',sans-serif] text-[29px] leading-none font-semibold tracking-[-1px] text-[#6af400]">Dw</div>
        <Fit w={273} className={`ml-[7px] ${label}`}>Adobe Dreamweav...</Fit>
      </div>
      <div className="ml-auto flex shrink-0 items-center">
        <div className="mt-[6px]"><HelpIcon /></div>
        <svg className="mt-[-4px] ml-[25px] h-[18px] w-[32px]" viewBox="0 0 32 18" fill="none" stroke="#fff" strokeWidth="2.500"><path d="M1 17L16 2l15 15" /></svg>
        <svg className="ml-[25px] h-[22px] w-[38px]" viewBox="0 0 38 22" fill="none" stroke="#fff" strokeWidth="2.500">
          <path d="M1.500 1.500h33v19h-33z" /><path d="M5 5h14v12H5zM35 7h3v8h-3z" fill="#fff" stroke="none" />
        </svg>
        <svg className="ml-[20px] h-[26px] w-[40px]" viewBox="0 0 40 26">
          <path d="M3 22q-5-4-2-9 2-3 5-3Q8 4 13 4q4-5 10-3 5 1 7 6-10-2-14 4-8 3-7 11z" fill="#fff" />
          <path d="M14 26q-5-1-5-6 1-5 6-5 3-8 11-6 6 2 6 7 8 1 8 6-1 4-5 4z" fill="#fff" stroke="#071216" strokeWidth="1" />
        </svg>
        <svg className="ml-[27px] h-[30px] w-[30px]" viewBox="0 0 30 30" fill="none" stroke="#fff" strokeWidth="2">
          <path d="M1 30Q3 4 30 1M9 30Q10 12 30 9M17 30Q18 19 30 17" /><circle cx="27" cy="27" r="3" fill="#fff" stroke="none" />
        </svg>
        <svg className="ml-[22px] h-[37px] w-[42px]" viewBox="0 0 42 37" fill="none" stroke="#fff" strokeWidth="2">
          <path d="M1 12h5l9-8v29l-9-8H1zM20 12q4 6 0 13M26 7q7 11 0 23M32 2q11 16 0 33" />
        </svg>
        <div className="ml-[25px] flex w-[56px] flex-col items-center">
          <Fit w={55} className="text-[29.500px] leading-[42px]">ENG</Fit>
          <Fit w={37} className="text-[29.500px] leading-[42px]">US</Fit>
        </div>
        <div className="ml-[33px] flex w-[138px] flex-col items-center">
          <Fit w={109} className="text-[29.500px] leading-[46px]">4:01 PM</Fit>
          <Fit w={137} className="text-[29.500px] leading-[46px]">6/27/2018</Fit>
        </div>
        <div className="relative ml-[45px] h-[60px] w-[91px]">
          <svg className="absolute top-0 left-0 h-[40px] w-[41px]" viewBox="0 0 41 40">
            <path d="M0 0h41v34H22l-6 6V34H0z" fill="#fff" />
            <path d="M9 8.500h23M9 16.500h23M9 24.500h23" stroke="#071216" strokeWidth="2.500" />
          </svg>
          <div className="absolute top-[17px] left-[17px] flex size-[42px] items-center justify-center rounded-full border-[2px] border-[#8a9092] bg-[#2b3235]/90 font-['Open_Sans',sans-serif] text-[27px] leading-none font-semibold">7</div>
        </div>
        <div className="h-[100px] w-[12px] border-l-[2px] border-[#666c6e]" />
      </div>
    </div>
  );
}

export default function App() {
  return (
    <div className="h-[2230px] w-[3840px] overflow-hidden bg-white">
      <TabStrip />
      <Toolbar />
      <Bookmarks />
      <Page />
      <Taskbar />
    </div>
  );
}
